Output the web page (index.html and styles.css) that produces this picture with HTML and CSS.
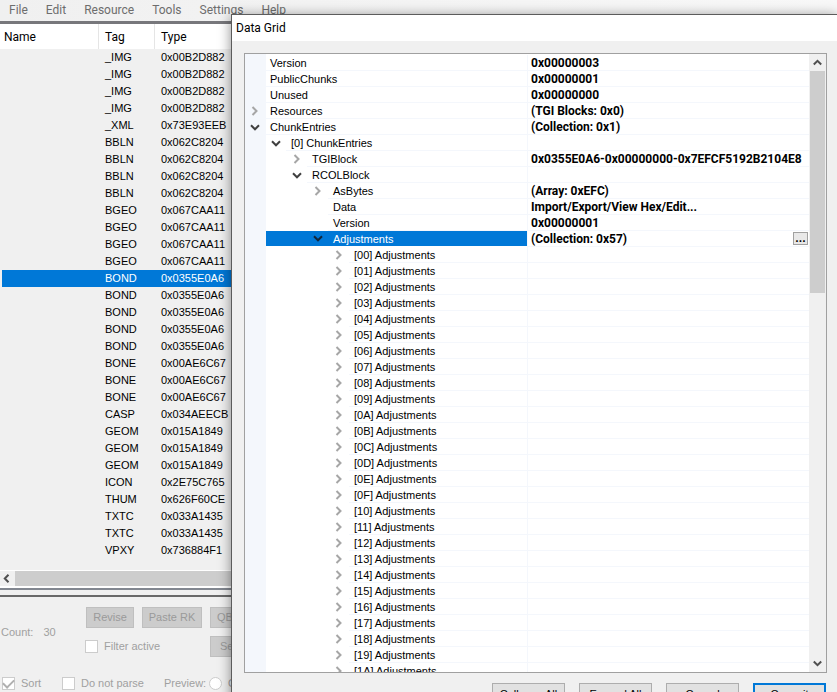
FILE: index.html
```html
<!DOCTYPE html>
<html lang="en">
<head>
<meta charset="utf-8">
<title>Data Grid</title>
<link rel="stylesheet" href="styles.css">
</head>
<body>
<main class="app">
  <nav class="menu">
    <button>File</button><button>Edit</button><button>Resource</button><button>Tools</button><button>Settings</button><button>Help</button>
  </nav>
  <section class="list">
    <table class="resources">
      <thead><tr><th class="col-name">Name</th><th class="col-tag">Tag</th><th>Type</th></tr></thead>
      <tbody id="resources"></tbody>
    </table>
    <div class="hscroll">
      <button aria-label="Scroll left"><svg width="7" height="9" viewBox="0 0 7 9"><path d="M5.5 .8 1.8 4.5l3.7 3.7" fill="none" stroke="#505050" stroke-width="2"/></svg></button>
      <div class="hthumb"></div>
    </div>
  </section>
  <section class="panel">
    <div class="count"><span>Count:</span><span>30</span></div>
    <div class="actions">
      <button class="btn revise" disabled>Revise</button>
      <button class="btn paste" disabled>Paste RK</button>
      <button class="btn side" disabled>QB</button>
      <label class="check filter"><input type="checkbox" disabled>Filter active</label>
      <button class="btn side set" disabled>Set</button>
    </div>
    <div class="options">
      <label class="check sort"><input type="checkbox" checked disabled>Sort</label>
      <label class="check parse"><input type="checkbox" disabled>Do not parse</label>
      <span class="preview">Preview:</span>
      <label class="check"><input type="radio" disabled>Off</label>
    </div>
  </section>
</main>
<section class="dialog" role="dialog" aria-labelledby="title">
  <h1 id="title">Data Grid</h1>
  <div class="content">
    <div class="grid">
      <div class="rows"><table class="props"><tbody id="props"></tbody></table></div>
      <div class="vscroll">
        <button aria-label="Scroll up"><svg width="9" height="7" viewBox="0 0 9 7"><path d="M.8 5.5 4.5 1.8l3.7 3.7" fill="none" stroke="#505050" stroke-width="2"/></svg></button>
        <div class="track"><div class="vthumb"></div></div>
        <button aria-label="Scroll down"><svg width="9" height="7" viewBox="0 0 9 7"><path d="M.8 1.5 4.5 5.2l3.7-3.7" fill="none" stroke="#505050" stroke-width="2"/></svg></button>
      </div>
    </div>
    <footer>
      <button>Collapse All</button><button>Expand All</button><button>Cancel</button><button class="default">Commit</button>
    </footer>
  </div>
</section>
<script src="script.js"></script>
</body>
</html>
```
FILE: styles.css
```css
* { box-sizing: border-box; }
html, body { height: 100%; margin: 0; }
body { position: relative; overflow: hidden; background: #f0f0f0; color: #000; font: 11px/17px "Liberation Sans", Arial, sans-serif; }
button, input { font: inherit; color: inherit; margin: 0; padding: 0; }
table { border-collapse: separate; border-spacing: 0; table-layout: fixed; }
th, td { padding: 0; text-align: left; font-weight: normal; white-space: nowrap; }
svg { display: block; }

.app { display: flex; flex-direction: column; height: 100%; }
.menu { display: flex; gap: 18px; height: 24px; padding: 0 9px 1px; border-bottom: 3px solid #77777b; background: linear-gradient(90deg, #f0f0f0, #f8f8f8); font-family: Roboto, sans-serif; font-size: 12px; color: #6d6d6d; }
.menu button { border: 0; background: none; }

.list { flex: 1; display: flex; flex-direction: column; min-height: 0; border-bottom: 2px solid #828790; }
.resources { width: 100%; }
.resources th { height: 25px; padding: 2px 0 0 6px; background: #fff; border-right: 1px solid #e5e5e5; font-family: Roboto, sans-serif; font-size: 12px; }
.resources th.col-name { width: 99px; padding-left: 4px; }
.resources th.col-tag { width: 56px; }
.resources td { height: 17px; padding-left: 6px; }
.resources .selected { color: #fff; background: #0078d7; }
.resources .selected td:first-child { border-left: 2px solid #f0f0f0; }
.hscroll { display: flex; align-items: stretch; height: 18px; margin-top: auto; border-top: 1px solid #fff; border-bottom: 2px solid #fff; }
.hscroll button { display: grid; place-items: center; width: 15px; padding-right: 3px; border: 0; background: #f0f0f0; }
.hthumb { flex: 1; background: #cdcdcd; }

.panel { display: grid; grid-template-columns: 86px 1fr; height: 97px; padding-top: 10px; border-top: 2px solid #696969; margin-top: 5px; color: #a0a0a0; align-content: start; }
.count { display: flex; gap: 10px; align-items: center; padding-left: 1px; }
.actions { display: grid; grid-template-columns: 48px 60px 60px; gap: 8px; align-items: center; }
.btn { height: 21px; border: 1px solid #bfbfbf; background: #cccccc; color: #9a9a9a; }
.side { padding-left: 6px; text-align: left; }
.set { padding-left: 9px; }
.filter { grid-column: span 2; }
.check { display: flex; align-items: center; gap: 6px; }
.filter { margin-left: -1px; }
.check input { appearance: none; width: 13px; height: 13px; border: 1px solid #ccc; background: #fff; }
.check input[type="radio"] { border-radius: 50%; }
.check input:checked { display: grid; place-items: center; }
.check input:checked::after { content: ""; width: 9px; height: 5px; border: solid #b0b0b0; border-width: 0 0 2px 2px; transform: translateY(-1px) rotate(-45deg); }
.options { grid-column: span 2; display: flex; align-items: center; margin-top: 18px; padding-left: 2px; }
.sort { width: 60px; }
.parse { width: 102px; }
.preview { width: 45px; }

.dialog { position: absolute; left: 231px; right: 0; top: 14px; bottom: -26px; display: flex; flex-direction: column; border: solid #5c5c5c; border-width: 1px 0 0 1px; background: #f0f0f0; box-shadow: 0 2px 12px rgba(0, 0, 0, .45); }
.dialog h1 { height: 26px; margin: 0; padding-left: 4px; background: #fff; font: 12px/26px Roboto, sans-serif; }
.content { flex: 1; display: flex; flex-direction: column; gap: 10px; min-height: 0; padding: 12px 10px 12px 12px; }
.grid { flex: 1; display: flex; min-height: 0; border: 1px solid #a0a0a0; background: #fff; }
.rows { flex: 1; min-width: 0; padding-top: 1px; overflow: hidden; background: linear-gradient(90deg, #f4f7fc 21px, #fff 21px); }
.props { width: 100%; }
.props td { height: 16px; line-height: 16px; }
.props .name { width: 283px; border-right: 1px solid #f4f7fc; }
.props .tree { display: flex; height: 16px; }
.tree .indent { width: calc(var(--level) * 21px); }
.tree .label { flex: 1; padding-left: 5px; border-bottom: 1px solid #f4f7fc; }
.tree .expander { display: grid; place-items: center; width: 20px; border: 0; background: none; color: #a6a6a6; }
.tree .expander.open { color: #404040; }
.props .value { padding-left: 3px; border-bottom: 1px solid #f4f7fc; font: bold 12px/16px Roboto, sans-serif; }
.props .selected .tree { color: #fff; background: linear-gradient(90deg, #f4f7fc 21px, #0078d7 21px); height: 15px; margin-bottom: 1px; }
.props .selected .tree .label { border: 0; }
.props .selected .expander { color: #10263c; }
.cell { display: flex; justify-content: space-between; height: 15px; }
.more { width: 15px; height: 13px; margin: 1px 1px 0 0; border: 1px solid #a0a0a0; background: #e8e8e8; line-height: 9px; }
.vscroll { display: flex; flex-direction: column; width: 17px; padding: 0 1px; background: #f0f0f0; }
.vscroll button { display: grid; place-items: center; height: 17px; border: 0; background: none; }
.track { flex: 1; }
.vthumb { height: 38%; background: #cdcdcd; }
footer { display: flex; justify-content: flex-end; gap: 14px; padding-right: 1px; }
footer button { width: 73px; height: 23px; border: 1px solid #adadad; background: #e1e1e1; }
footer .default { border: 2px solid #0078d7; }
```
FILE: script.js
```js
const groups = [
  ["_IMG", "0x00B2D882", 4], ["_XML", "0x73E93EEB", 1], ["BBLN", "0x062C8204", 4],
  ["BGEO", "0x067CAA11", 4], ["BOND", "0x0355E0A6", 5], ["BONE", "0x00AE6C67", 3],
  ["CASP", "0x034AEECB", 1], ["GEOM", "0x015A1849", 3], ["ICON", "0x2E75C765", 1],
  ["THUM", "0x626F60CE", 1], ["TXTC", "0x033A1435", 2], ["VPXY", "0x736884F1", 1]
];
const selectedResource = 13;
const resources = groups.flatMap(([tag, type, n]) => Array(n).fill([tag, type]));
document.getElementById("resources").innerHTML = resources.map(([tag, type], i) =>
  `<tr${i === selectedResource ? ' class="selected"' : ""}><td></td><td>${tag}</td><td>${type}</td></tr>`).join("");

// [level, state, name, value]
const props = [
  [0, "", "Version", "0x00000003"],
  [0, "", "PublicChunks", "0x00000001"],
  [0, "", "Unused", "0x00000000"],
  [0, "closed", "Resources", "(TGI Blocks: 0x0)"],
  [0, "open", "ChunkEntries", "(Collection: 0x1)"],
  [1, "open", "[0] ChunkEntries", ""],
  [2, "closed", "TGIBlock", "0x0355E0A6-0x00000000-0x7EFCF5192B2104E8"],
  [2, "open", "RCOLBlock", ""],
  [3, "closed", "AsBytes", "(Array: 0xEFC)"],
  [3, "", "Data", "Import/Export/View Hex/Edit..."],
  [3, "", "Version", "0x00000001"],
  [3, "open", "Adjustments", "(Collection: 0x57)"]
];
for (let i = 0; i <= 0x1a; i++) {
  props.push([4, "closed", `[${i.toString(16).toUpperCase().padStart(2, "0")}] Adjustments`, ""]);
}
const icons = {
  open: '<svg width="10" height="7" viewBox="0 0 10 7"><path d="M1 1.3l4 4 4-4" fill="none" stroke="currentColor" stroke-width="2"/></svg>',
  closed: '<svg width="8" height="10" viewBox="0 0 8 10"><path d="M1.5 1l4 4-4 4" fill="none" stroke="currentColor" stroke-width="2"/></svg>'
};
document.getElementById("props").innerHTML = props.map(([level, state, name, value], i) => {
  const toggle = state
    ? `<button class="expander ${state}" aria-label="Toggle ${name}">${icons[state]}</button>`
    : '<span class="expander"></span>';
  const selected = i === 11;
  const more = selected ? '<button class="more">...</button>' : "";
  return `<tr${selected ? ' class="selected"' : ""}><td class="name"><div class="tree"><span class="indent" style="--level:${level}"></span>${toggle}<span class="label">${name}</span></div></td><td class="value"><div class="cell"><span>${value}</span>${more}</div></td></tr>`;
}).join("");
```
